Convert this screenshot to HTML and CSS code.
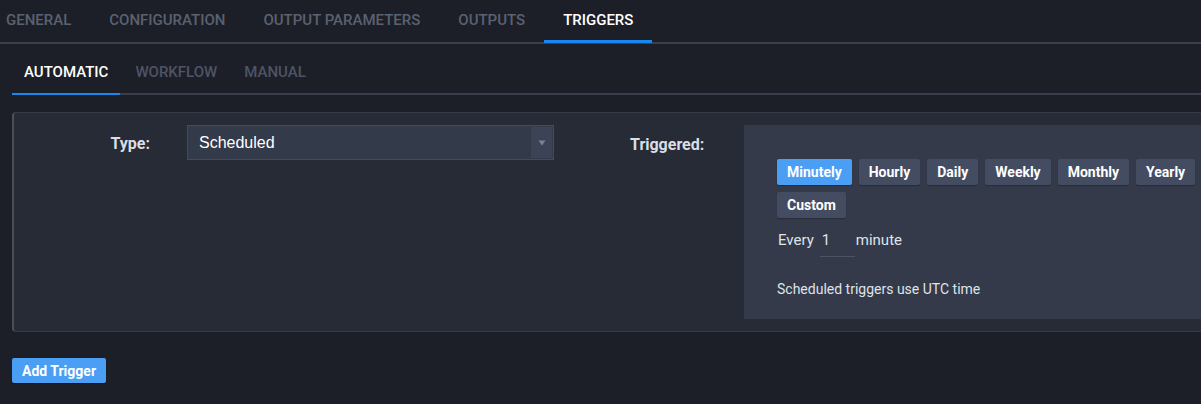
FILE: index.html
```html
<!DOCTYPE html>
<html>
<head>
<meta charset="utf-8">
<link rel="stylesheet" href="styles.css">
</head>
<body>
<div class="page">
  <nav class="tabs">
    <a class="tab">GENERAL</a>
    <a class="tab">CONFIGURATION</a>
    <a class="tab">OUTPUT PARAMETERS</a>
    <a class="tab">OUTPUTS</a>
    <a class="tab active">TRIGGERS</a>
  </nav>
  <nav class="subtabs">
    <a class="subtab active">AUTOMATIC</a>
    <a class="subtab">WORKFLOW</a>
    <a class="subtab">MANUAL</a>
  </nav>
  <section class="panel">
    <div class="type-label">Type:</div>
    <div class="select">
      <span class="select-value">Scheduled</span>
      <span class="select-arrow"><svg width="8" height="6" viewBox="0 0 8 6"><path d="M0.5 0.5 H7.5 L4 5.5 Z" fill="#7c8292"/></svg></span>
    </div>
    <div class="trig-label">Triggered:</div>
    <div class="sched">
      <div class="btns">
        <button class="btn primary">Minutely</button>
        <button class="btn">Hourly</button>
        <button class="btn">Daily</button>
        <button class="btn">Weekly</button>
        <button class="btn">Monthly</button>
        <button class="btn">Yearly</button>
        <button class="btn">Custom</button>
      </div>
      <div class="every">
        <span>Every</span>
        <input class="num" type="text" value="1">
        <span>minute</span>
      </div>
      <p class="note">Scheduled triggers use UTC time</p>
    </div>
  </section>
  <button class="add-btn">Add Trigger</button>
</div>
</body>
</html>
```
FILE: styles.css
```css
html, body {
  margin: 0;
  padding: 0;
  background: #1c1f27;
  overflow: hidden;
}
body {
  font-family: Roboto, "Liberation Sans", sans-serif;
  color: #d7dce5;
}
.page {
  width: 1201px;
  height: 404px;
  overflow: hidden;
}
.tabs {
  display: flex;
  height: 42px;
  border-bottom: 2px solid #3a3f4e;
  margin-left: -13px;
}
.tab {
  position: relative;
  padding: 0 19px;
  line-height: 41px;
  font-size: 15px;
  font-weight: 500;
  color: #5b6170;
}
.tab.active {
  color: #ffffff;
}
.tab.active::after {
  content: "";
  position: absolute;
  left: 0;
  right: 0;
  bottom: -1px;
  height: 3px;
  background: #1a86f0;
}
.subtabs {
  display: flex;
  margin: 8px 0 0 12px;
  height: 41px;
  border-bottom: 2px solid #3a3f4e;
}
.subtab {
  position: relative;
  padding: 0 12px;
  margin-right: 3px;
  line-height: 41px;
  font-size: 15px;
  font-weight: 500;
  color: #4e5464;
}
.subtab.active {
  color: #ffffff;
}
.subtab.active::after {
  content: "";
  position: absolute;
  left: 0;
  right: 0;
  bottom: -2px;
  height: 2px;
  background: #1a86f0;
}
.panel {
  display: flex;
  align-items: flex-start;
  margin: 17px 0 0 12px;
  width: 1300px;
  height: 194px;
  padding: 12px 0;
  background: #262b36;
  border: 1px solid #363b48;
  border-left: 2px solid #4a4f5b;
  border-radius: 4px;
}
.type-label {
  width: 136px;
  text-align: right;
  font-weight: 700;
  font-size: 16px;
  padding-top: 9px;
  color: #d9dee7;
}
.select {
  display: flex;
  align-items: stretch;
  margin-left: 37px;
  width: 365px;
  height: 33px;
  background: #333a4a;
  border: 1px solid #444b5c;
}
.select-value {
  flex: 1;
  padding-left: 11px;
  line-height: 33px;
  font-family: "Liberation Sans", Arial, sans-serif;
  font-size: 16px;
  color: #ffffff;
}
.select-arrow {
  width: 21px;
  margin: 1px 1px 1px 0;
  background: #3c4357;
  display: flex;
  align-items: center;
  justify-content: center;
}
.trig-label {
  margin-left: 76px;
  width: 74px;
  font-weight: 700;
  font-size: 16px;
  padding-top: 10px;
  color: #d9dee7;
}
.sched {
  margin-left: 40px;
  width: 480px;
  height: 194px;
  box-sizing: border-box;
  padding: 34px 0 0 33px;
  background: #343a4a;
}
.btns {
  display: flex;
  flex-wrap: wrap;
  gap: 7px;
}
.btn {
  height: 26px;
  padding: 0 10px;
  border: 0;
  border-radius: 2px;
  background: #444c62;
  color: #ffffff;
  font-family: Roboto, "Liberation Sans", sans-serif;
  font-weight: 700;
  font-size: 14px;
  box-shadow: 0 1px 1px rgba(0,0,0,0.25);
}
.btn.primary {
  background: #4a9ff5;
}
.every {
  display: flex;
  align-items: flex-start;
  margin-top: 10px;
  font-size: 15px;
  line-height: 24px;
  color: #dfe3ea;
  padding-left: 1px;
}
.num {
  width: 35px;
  height: 29px;
  box-sizing: border-box;
  border: 0;
  border-bottom: 1px solid #4b5264;
  background: transparent;
  color: #dfe3ea;
  font-family: Roboto, "Liberation Sans", sans-serif;
  font-size: 15px;
  line-height: 24px;
  padding: 0 0 5px 2px;
  margin: 0 1px 0 6px;
  outline: none;
}
.note {
  margin: 24px 0 0 0;
  font-size: 14px;
  color: #dfe3ea;
}
.add-btn {
  display: block;
  margin: 26px 0 0 12px;
  height: 25px;
  padding: 0 10px;
  border: 0;
  border-radius: 2px;
  background: #4a9ff5;
  color: #ffffff;
  font-family: Roboto, "Liberation Sans", sans-serif;
  font-weight: 700;
  font-size: 14px;
  box-shadow: 0 1px 1px rgba(0,0,0,0.3);
}
```
